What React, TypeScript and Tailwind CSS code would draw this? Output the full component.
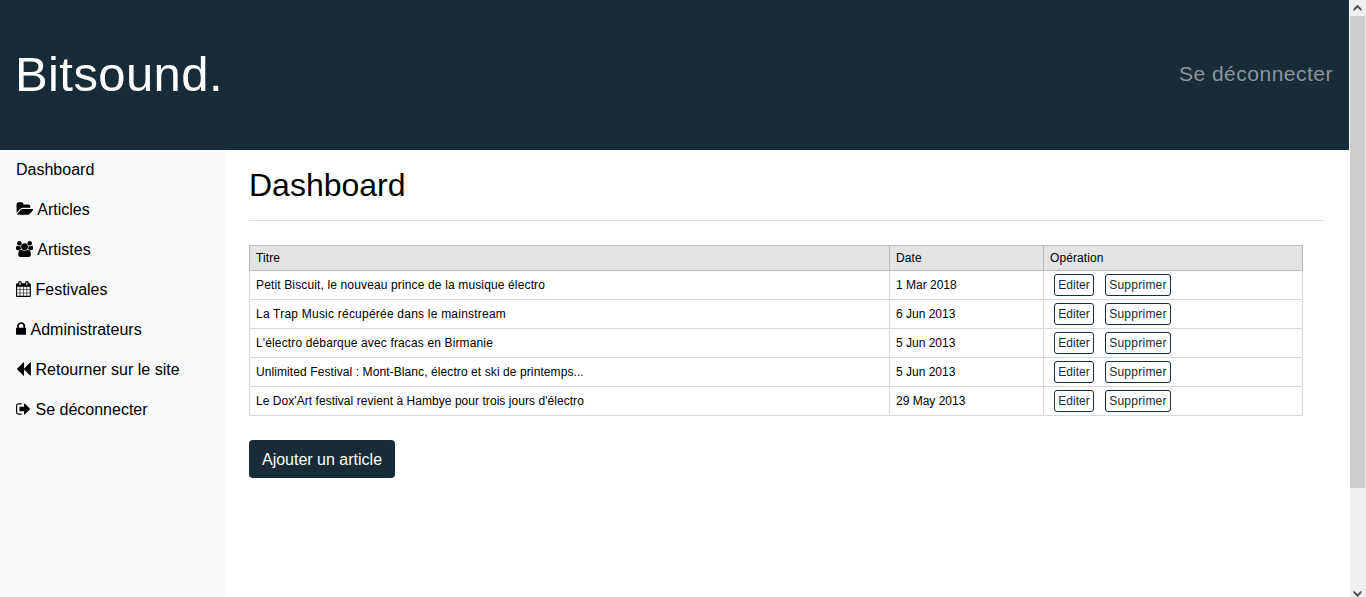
type Glyph = { viewBox: string; width: string; d: string };

const glyphs: Record<string, Glyph> = {
  folder: {
    viewBox: '0 0 1943 1792',
    width: 'w-[17.35px] mr-[0.4px]',
    d: 'M1943 952q0 31-31 66l-336 396q-43 51-120.5 86.5t-143.5 35.5h-1088q-34 0-60.5-13t-26.5-43q0-31 31-66l336-396q43-51 120.5-86.5t143.5-35.5h1088q34 0 60.5 13t26.5 43zm-343-344v160h-832q-94 0-197 47.5t-164 119.5l-337 396-5 6q0-4-.5-12.5t-.5-12.5v-960q0-92 66-158t158-66h320q92 0 158 66t66 158v32h544q92 0 158 66t66 158z',
  },
  users: {
    viewBox: '0 0 1920 1792',
    width: 'w-[17.14px] mr-[0.6px]',
    d: 'M593 896q-162 5-265 128h-134q-82 0-138-40.5t-56-118.5q0-353 124-353 6 0 43.5 21t97.5 42.5 119 21.5q67 0 133-23-5 37-5 66 0 139 81 256zm1071 637q0 120-73 189.5t-194 69.5h-874q-121 0-194-69.5t-73-189.5q0-53 3.5-103.5t14-109 26.5-108.5 43-97.5 62-81 85.5-53.5 111.5-20q10 0 43 21.5t73 48 107 48 135 21.5 135-21.5 107-48 73-48 43-21.5q61 0 111.5 20t85.5 53.5 62 81 43 97.5 26.5 108.5 14 109 3.5 103.5zm-1024-1277q0 106-75 181t-181 75-181-75-75-181 75-181 181-75 181 75 75 181zm704 384q0 159-112.5 271.5t-271.5 112.5-271.5-112.5-112.5-271.5 112.5-271.5 271.5-112.5 271.5 112.5 112.5 271.5zm576 225q0 78-56 118.5t-138 40.5h-134q-103-123-265-128 81-117 81-256 0-29-5-66 66 23 133 23 59 0 119-21.5t97.5-42.5 43.5-21q124 0 124 353zm-128-609q0 106-75 181t-181 75-181-75-75-181 75-181 181-75 181 75 75 181z',
  },
  calendar: {
    viewBox: '0 0 1664 1792',
    width: 'w-[14.86px] mr-[0.2px]',
    d: 'M128 1664h288v-288h-288v288zm352 0h320v-288h-320v288zm-352-352h288v-320h-288v320zm352 0h320v-320h-320v320zm-352-384h288v-288h-288v288zm736 736h320v-288h-320v288zm-384-736h320v-288h-320v288zm768 736h288v-288h-288v288zm-384-352h320v-320h-320v320zm-352-864v-288q0-13-9.5-22.5t-22.5-9.5h-64q-13 0-22.5 9.5t-9.5 22.5v288q0 13 9.5 22.5t22.5 9.5h64q13 0 22.5-9.5t9.5-22.5zm736 864h288v-320h-288v320zm-384-384h320v-288h-320v288zm384 0h288v-288h-288v288zm32-480v-288q0-13-9.5-22.5t-22.5-9.5h-64q-13 0-22.5 9.5t-9.5 22.5v288q0 13 9.5 22.5t22.5 9.5h64q13 0 22.5-9.5t9.5-22.5zm384-64v1280q0 52-38 90t-90 38h-1408q-52 0-90-38t-38-90v-1280q0-52 38-90t90-38h128v-96q0-66 47-113t113-47h64q66 0 113 47t47 113v96h384v-96q0-66 47-113t113-47h64q66 0 113 47t47 113v96h128q52 0 90 38t38 90z',
  },
  lock: {
    viewBox: '320 0 1152 1792',
    width: 'w-[10.29px] mr-[0.7px]',
    d: 'M640 768h512v-192q0-106-75-181t-181-75-181 75-75 181v192zm832 96v576q0 40-28 68t-68 28h-960q-40 0-68-28t-28-68v-576q0-40 28-68t68-28h32v-192q0-184 132-316t316-132 316 132 132 316v192h32q40 0 68 28t28 68z',
  },
  backward: {
    viewBox: '64 0 1664 1792',
    width: 'w-[14.86px] mr-[0.2px]',
    d: 'M1683 141q19-19 32-13t13 32v1472q0 26-13 32t-32-13l-710-710q-9-9-13-19v710q0 26-13 32t-32-13l-710-710q-19-19-19-45t19-45l710-710q19-19 32-13t13 32v710q4-10 13-19z',
  },
  signOut: {
    viewBox: '64 0 1664 1792',
    width: 'w-[14.86px] mr-[0.2px]',
    d: 'M704 1440q0 4 1 20t.5 26.5-3 23.5-10 19.5-20.5 6.5h-320q-119 0-203.5-84.5t-84.5-203.5v-704q0-119 84.5-203.5t203.5-84.5h320q13 0 22.5 9.5t9.5 22.5q0 4 1 20t.5 26.5-3 23.5-10 19.5-20.5 6.5h-320q-66 0-113 47t-47 113v704q0 66 47 113t113 47h312l11.5 1 11.5 3 8 5.5 7 9 2 13.5zm928-544q0 26-19 45l-544 544q-19 19-45 19t-45-19-19-45v-288h-448q-26 0-45-19t-19-45v-384q0-26 19-45t45-19h448v-288q0-26 19-45t45-19 45 19l544 544q19 19 19 45z',
  },
};

const links = [
  { label: 'Dashboard' },
  { label: 'Articles', icon: 'folder' },
  { label: 'Artistes', icon: 'users' },
  { label: 'Festivales', icon: 'calendar' },
  { label: 'Administrateurs', icon: 'lock' },
  { label: 'Retourner sur le site', icon: 'backward' },
  { label: 'Se déconnecter', icon: 'signOut' },
];

const articles = [
  { title: 'Petit Biscuit, le nouveau prince de la musique électro', date: '1 Mar 2018', tracking: 'tracking-[0.14px]' },
  { title: 'La Trap Music récupérée dans le mainstream', date: '6 Jun 2013', tracking: 'tracking-[0.22px]' },
  { title: "L'électro débarque avec fracas en Birmanie", date: '5 Jun 2013', tracking: 'tracking-[0.14px]' },
  { title: 'Unlimited Festival : Mont-Blanc, électro et ski de printemps...', date: '5 Jun 2013', tracking: 'tracking-[0.09px]' },
  { title: "Le Dox'Art festival revient à Hambye pour trois jours d'électro", date: '29 May 2013', tracking: 'tracking-[0.05px]' },
];

function Icon({ name }: { name: string }) {
  const g = glyphs[name];
  return (
    <svg viewBox={g.viewBox} className={`inline-block h-4 align-[-2.29px] ${g.width}`} fill="currentColor">
      <path d={g.d} />
    </svg>
  );
}

function Scrollbar() {
  return (
    <div className="flex w-4 shrink-0 flex-col items-center bg-[#f0f0f0]">
      <svg className="h-4 w-4" viewBox="0 0 16 16">
        <path d="M7.5 4.8 11.5 8.7V11.3L7.5 7.8 3.5 11.3V8.7Z" fill="#505050" />
      </svg>
      <div className="mr-px h-[472px] w-[15px] bg-[#cdcdcd]" />
      <svg className="mt-auto h-[10px] w-4" viewBox="0 0 16 10">
        <path d="M7.5 10 11.5 6.1V3.5L7.5 7 3.5 3.5V6.1Z" fill="#505050" />
      </svg>
    </div>
  );
}

export default function App() {
  return (
    <div className="flex h-[597px] w-[1366px] overflow-hidden bg-white font-['Liberation_Sans',Arial,sans-serif] text-base text-black">
      <div className="mr-px flex w-[1349px] shrink-0 flex-col">
        <header className="flex h-[150px] shrink-0 items-center justify-between bg-[#172b39] pl-[15px] pr-4">
          <a className="pb-0.5 text-[49px] leading-[48px] tracking-[0.4px] text-white">Bitsound.</a>
          <a className="pb-0.5 text-[21px] leading-7 tracking-[0.5px] text-[#8b959c]">Se déconnecter</a>
        </header>
        <div className="flex flex-1">
          <nav className="w-[225px] bg-[#f8f9fb]">
            {links.map(({ label, icon }) => (
              <a key={label} className="block h-10 whitespace-pre px-4 py-2 leading-6">
                {icon && <Icon name={icon} />}
                {icon ? ' ' + label : label}
              </a>
            ))}
          </nav>
          <main className="flex-1 px-6 pt-4">
            <h1 className="text-[32px] leading-[38px]">Dashboard</h1>
            <hr className="mt-4 border-[#e0e0e0]" />
            <table className="mt-6 w-[1054px] table-fixed border-collapse text-left text-xs">
              <colgroup>
                <col className="w-[640px]" />
                <col className="w-[154px]" />
                <col />
              </colgroup>
              <thead>
                <tr className="h-[25px] bg-[#e4e4e4]">
                  {['Titre', 'Date', 'Opération'].map((h) => (
                    <th key={h} className="border border-[#b8b8b8] px-1.5 py-0 font-normal tracking-[0.1px]">{h}</th>
                  ))}
                </tr>
              </thead>
              <tbody>
                {articles.map(({ title, date, tracking }) => (
                  <tr key={title} className="h-[29px]">
                    <td className={`border border-[#d9d9d9] px-1.5 py-0 ${tracking}`}>{title}</td>
                    <td className="border border-[#d9d9d9] px-1.5 py-0">{date}</td>
                    <td className="border border-[#d9d9d9] px-2.5 py-0">
                      <div className="flex gap-[11px] text-[#172b39]">
                        <button className="h-[22px] w-10 rounded-[3px] border border-[#172b39]">Editer</button>
                        <button className="h-[22px] w-[66px] rounded-[3px] border border-[#172b39] tracking-[0.25px]">Supprimer</button>
                      </div>
                    </td>
                  </tr>
                ))}
              </tbody>
            </table>
            <button className="mt-6 h-[38px] w-[146px] rounded bg-[#172b39] pt-px text-white">Ajouter un article</button>
          </main>
        </div>
      </div>
      <Scrollbar />
    </div>
  );
}
